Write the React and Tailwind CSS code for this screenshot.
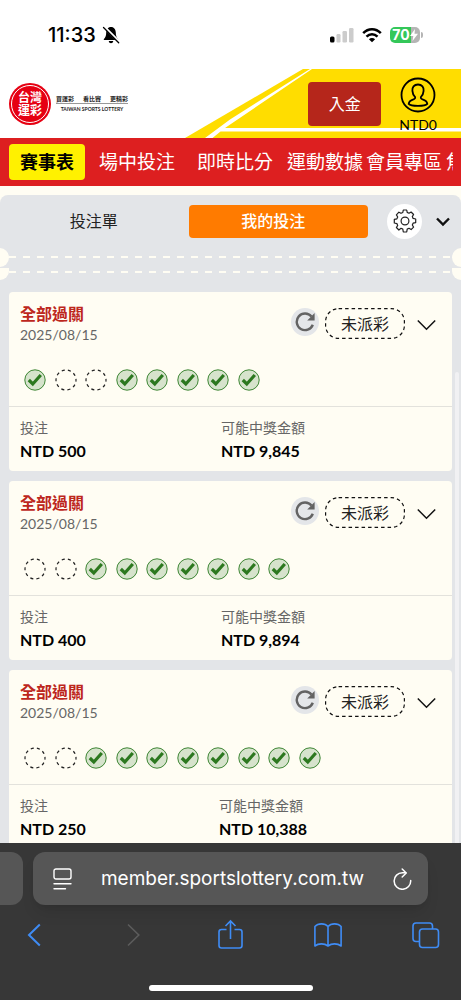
const navItems = [
  { label: '賽事表', active: true, className: 'ml-[9px] w-19 text-lg' },
  { label: '場中投注', className: 'ml-3.5 text-[19px]' },
  { label: '即時比分', className: 'ml-[22px] text-[19px]' },
  { label: '運動數據', className: 'ml-3.5 text-[19px]' },
  { label: '會員專區', className: 'ml-[3px] text-[19px]' },
  { label: '焦點', className: 'ml-1 text-[19px]' },
]

const bets = [
  { id: 1, date: '2025/08/15', legs: [1, 0, 0, 1, 1, 1, 1, 1], stake: 'NTD 500', payout: 'NTD 9,845' },
  { id: 2, date: '2025/08/15', legs: [0, 0, 1, 1, 1, 1, 1, 1, 1], stake: 'NTD 400', payout: 'NTD 9,894' },
  { id: 3, date: '2025/08/15', legs: [0, 0, 1, 1, 1, 1, 1, 1, 1, 1], stake: 'NTD 250', payout: 'NTD 10,388' },
]

function StatusBar() {
  return (
    <div className="flex h-[69px] shrink-0 items-center justify-between bg-white pr-[38px] pl-12 font-['Inter','Liberation_Sans',sans-serif]">
      <div className="flex items-center gap-1.5">
        <span className="text-xl leading-6 font-medium text-black">11:33</span>
        <svg className="h-4.5 w-4.5" viewBox="0 0 18 18">
          <path d="M9 1C5.8 1 4.3 3.5 4.2 6.5 4.1 10 3.7 11 1.8 13.2v.9h14.4v-.9c-1.9-2.2-2.3-3.2-2.4-6.7C13.7 3.5 12.2 1 9 1zM6.7 15h4.6C11 16.5 10.2 17.2 9 17.2S7 16.5 6.7 15z" fill="#000" />
          <path d="M2.2 .8 17.2 15.8" stroke="#fff" strokeWidth="2.6" />
          <path d="M1.500 1.500 16.7 16.7" stroke="#000" strokeWidth="1.3" strokeLinecap="round" />
        </svg>
      </div>
      <div className="flex items-center gap-2">
        <svg className="h-4 w-6" viewBox="0 0 24 16">
          <rect x="0" y="9.500" width="4.5" height="6" rx="1.500" fill="#000" />
          <rect x="6.500" y="7" width="4" height="8.500" rx="1.2" fill="#ccc" />
          <rect x="12.500" y="4" width="4.500" height="11.500" rx="1.2" fill="#ccc" />
          <rect x="19" y="1" width="4.500" height="14.500" rx="1.2" fill="#ccc" />
        </svg>
        <svg className="h-4 w-5" viewBox="0 0 20 16">
          <g fill="none" stroke="#000" strokeWidth="2.500">
            <path d="M1.200 6.200C6.200.9 13.800.9 18.800 6.200" />
            <path d="M4.500 9.700c3.200-3.200 7.800-3.200 11 0" />
          </g>
          <path d="M6.900 12.200c1.800-1.600 4.400-1.600 6.200 0L10 15.300z" fill="#000" />
        </svg>
        <div className="flex items-center gap-px">
          <div className="flex h-4 w-7.5 items-center justify-center rounded-[5px] bg-linear-to-r from-[#34c759] from-70% to-[#b5b5b5] to-70% text-sm leading-4 font-bold text-white">
            70
            <svg className="h-3 w-2" viewBox="0 0 8 12">
              <path d="M5 0 0 7h3.300L2.500 12 8 4.800H4.500z" fill="#fff" />
            </svg>
          </div>
          <span className="h-1.5 w-0.5 rounded-r-sm bg-[#b5b5b5]" />
        </div>
      </div>
    </div>
  )
}

function Brand() {
  return (
    <a href="#" className="flex items-center gap-[5px]" aria-label="台灣運彩">
      <span className="flex h-[42px] w-[42px] items-center justify-center rounded-full bg-[#e60012] p-0.5">
        <span className="flex h-full w-full flex-col items-center justify-center rounded-full border border-white text-xs leading-[13px] font-bold text-white">
          <span>台灣</span>
          <span>運彩</span>
        </span>
      </span>
      <span className="flex w-[72px] flex-col items-center text-[#222]">
        <span className="flex w-full justify-between border-b border-[#999] text-[6px] leading-2 font-bold whitespace-nowrap">
          <span>買運彩</span>
          <span>看比賽</span>
          <span>更精彩</span>
        </span>
        <span className="pt-px text-[5px] leading-2 font-bold whitespace-nowrap">TAIWAN SPORTS LOTTERY</span>
      </span>
    </a>
  )
}

function Header() {
  return (
    <header className="relative flex h-[69px] shrink-0 items-start justify-between bg-white pl-[9px]">
      <svg className="absolute top-0 right-0 h-[69px] w-[276px]" viewBox="0 0 276 69">
        <path d="M0 69 118 0H276V69z" fill="#ffdd00" />
        <path d="M125 0 45 50.500 20 69h7.500L35.500 62.500H276V59H40L127 0z" fill="#fff" />
      </svg>
      <div className="relative pt-3.5">
        <Brand />
      </div>
      <div className="relative flex items-start gap-[18px] pr-6">
        <button className="mt-[13px] h-[44px] w-[73px] rounded-sm bg-[#b5261b] text-base text-white">入金</button>
        <button className="flex flex-col items-center pt-2 text-black">
          <svg className="h-9 w-9" viewBox="0 0 36 36" fill="none" stroke="#000" strokeWidth="1.800">
            <circle cx="18" cy="18" r="16.500" />
            <path d="M18 7.500c-4 0-6 2.800-5.600 6.400.2 2.700 1.100 4.500 2.600 5.900.5 1.300 0 2-1.600 2.600-3 1-4.400 2.200-4.700 4.500 2.300 2.700 16.300 2.700 18.600 0-.3-2.300-1.700-3.500-4.700-4.500-1.600-.6-2.100-1.300-1.600-2.600 1.500-1.400 2.400-3.200 2.600-5.900.4-3.600-1.600-6.400-5.600-6.400z" />
          </svg>
          <span className="pt-1 text-sm leading-4">NTD0</span>
        </button>
      </div>
    </header>
  )
}

function Nav() {
  return (
    <nav className="h-12 shrink-0 bg-[#dd1f20] pr-2">
      <div className="flex h-full items-center overflow-hidden whitespace-nowrap">
        {navItems.map(({ label, active, className }) => (
          <a
            key={label}
            href="#"
            className={`flex h-9 shrink-0 items-center justify-center rounded-sm ${className} ${
              active ? 'bg-[#fff100] font-bold text-black' : 'text-white'
            }`}
          >
            {label}
          </a>
        ))}
      </div>
    </nav>
  )
}

function GearIcon() {
  return (
    <svg className="h-6 w-6" viewBox="0 0 24 24" fill="none" stroke="#222" strokeWidth="1.200" strokeLinejoin="round">
      <circle cx="12" cy="12" r="3.900" />
      <path d="M10.300 1h3.400l.5 2.400 1.800.8L18.100 3l2.500 2.500-1.300 2.100.8 1.800 2.600.6v3.600l-2.600.6-.8 1.800 1.300 2.100-2.500 2.500-2.100-1.300-1.800.8-.5 2.900h-3.400l-.5-2.900-1.800-.8L5.900 21l-2.500-2.500 1.300-2.100-.8-1.800-2.600-.6v-3.600l2.600-.6.8-1.800-1.300-2.100L5.900 3.200 8 4.300l1.800-.8z" />
    </svg>
  )
}

function Perforations() {
  return (
    <>
      <div className="relative flex h-5 items-center overflow-hidden px-[9px]">
        <div className="h-0.5 w-full bg-[repeating-linear-gradient(90deg,#fffdf3_0_7px,transparent_7px_14px)]" />
        <span className="absolute -left-2.5 h-[19px] w-[19px] rounded-full bg-[#fffdf3]" />
        <span className="absolute -right-2.5 h-[19px] w-[19px] rounded-full bg-[#fffdf3]" />
      </div>
      <div className="relative mt-px h-3 overflow-hidden px-[9px] pt-[3px]">
        <div className="h-0.5 w-full bg-[repeating-linear-gradient(90deg,#fffdf3_0_7px,transparent_7px_14px)]" />
        <span className="absolute top-0 left-0 h-3 w-[9px] rounded-br-full bg-[#fffdf3]" />
        <span className="absolute top-0 right-0 h-3 w-[9px] rounded-bl-full bg-[#fffdf3]" />
      </div>
    </>
  )
}

function Leg({ won }) {
  if (!won) {
    return (
      <svg className="h-[22px] w-[22px]" viewBox="0 0 22 22">
        <circle cx="11" cy="11" r="10" fill="none" stroke="#222" strokeWidth="1.200" strokeDasharray="3.100 3.180" strokeDashoffset="1.500" />
      </svg>
    )
  }
  return (
    <svg className="h-[22px] w-[22px]" viewBox="0 0 22 22">
      <circle cx="11" cy="11" r="10.200" fill="#d6e3cc" stroke="#3d8533" strokeWidth="1" />
      <path d="m4.800 11 4 4 8-9" fill="none" stroke="#2c781f" strokeWidth="3.200" />
    </svg>
  )
}

function BetCard({ bet }) {
  return (
    <article className="rounded-sm bg-[#fffdf3]">
      <div className="flex items-start justify-between pt-3 pr-4 pl-[11px]">
        <div>
          <h2 className="text-base leading-5 font-bold text-[#bd271d]">全部過關</h2>
          <p className="text-sm leading-[22px] text-[#666]">{bet.date}</p>
        </div>
        <div className="flex items-start pt-1">
          <button aria-label="重新整理" className="mr-1.5 flex h-7 w-7 items-center justify-center rounded-full bg-[#e4e6e9]">
            <svg className="h-5 w-5" viewBox="0 0 20 20" fill="none" stroke="#636363" strokeWidth="2.400">
              <path d="M17.800 12.800A8.300 8.300 0 1 1 16.500 4.600" />
              <path d="M19.600 1v7.400h-7.400z" fill="#636363" stroke="none" />
            </svg>
          </button>
          <span className="relative flex h-[31px] w-20 items-center justify-center text-base text-[#222]">
            <svg className="absolute inset-0 h-full w-full" viewBox="0 0 80 31">
              <rect x="0.600" y="0.600" width="78.800" height="29.800" rx="13" fill="none" stroke="#111" strokeWidth="1.200" strokeDasharray="3.500 3" />
            </svg>
            未派彩
          </span>
          <button aria-label="展開" className="mt-1.5 ml-3">
            <svg className="h-5 w-[19px]" viewBox="0 0 19 20" fill="none" stroke="#111" strokeWidth="1.500">
              <path d="m.8 6.500 8.700 8.700 8.700-8.700" />
            </svg>
          </button>
        </div>
      </div>
      <div className="border-b border-[#e3e2dc] pt-[23px] pb-[15px] pl-[11px]">
        <div className="grid w-[305px] grid-cols-10 justify-items-center">
          {bet.legs.map((won, i) => (
            <Leg key={i} won={won} />
          ))}
        </div>
      </div>
      <dl className="flex pt-[11px] pb-2 pl-[11px]">
        <div className={bet.id === 3 ? 'w-[199px]' : 'w-[201px]'}>
          <dt className="text-sm leading-5 text-[#666]">投注</dt>
          <dd className="mt-px text-base leading-6 font-bold text-black">{bet.stake}</dd>
        </div>
        <div>
          <dt className="text-sm leading-5 text-[#666]">可能中獎金額</dt>
          <dd className="mt-px text-base leading-6 font-bold text-black">{bet.payout}</dd>
        </div>
      </dl>
    </article>
  )
}

function BetPanel() {
  return (
    <main className="min-h-0 flex-1 overflow-hidden bg-[#fffdf3] pt-[9px]">
      <div className="relative h-full overflow-hidden rounded-t-lg bg-[#e3e5e8]">
        <div className="flex h-[52px] items-center pr-2.5 pl-[9px]">
          <button className="h-[33px] flex-1 pr-2.5 text-base text-[#222]">投注單</button>
          <button className="h-[33px] flex-1 rounded-sm bg-[#ff7b00] pr-2.5 text-base font-medium text-white">我的投注</button>
          <button aria-label="設定" className="ml-[19px] flex h-[35px] w-[35px] items-center justify-center rounded-full bg-white">
            <GearIcon />
          </button>
          <button aria-label="收合" className="ml-[13px]">
            <svg className="h-4 w-4" viewBox="0 0 16 16" fill="none" stroke="#111" strokeWidth="2.400">
              <path d="m2 5.500 6 6 6-6" />
            </svg>
          </button>
        </div>
        <Perforations />
        <div className="flex flex-col gap-2.5 px-[9px] pt-3">
          {bets.map(bet => (
            <BetCard key={bet.id} bet={bet} />
          ))}
        </div>
        <span className="absolute top-[177px] right-0.5 bottom-0 w-1 rounded-t-full bg-[#f1f1f3]" />
      </div>
    </main>
  )
}

function BrowserBar() {
  return (
    <footer className="shrink-0 overflow-hidden bg-[#373737] font-['Inter','Liberation_Sans',sans-serif]">
      <div className="flex gap-2.5 pt-[9px]">
        <span className="h-[53px] w-[23px] shrink-0 rounded-r-xl bg-[#565656]" />
        <div className="mr-[33px] flex h-[53px] flex-1 items-center justify-between rounded-xl bg-[#565656] pr-4 pl-5 shadow-lg">
          <button aria-label="頁面選單">
            <svg className="h-[22px] w-[19px]" viewBox="0 0 19 22" fill="none" stroke="#fff" strokeWidth="1.400" strokeLinecap="round">
              <rect x="1" y="1" width="17" height="10" rx="2" />
              <path d="M1 15.700h17M1 20.700h11.500" />
            </svg>
          </button>
          <span className="text-[19px] leading-6 text-white">member.sportslottery.com.tw</span>
          <button aria-label="重新載入">
            <svg className="h-[22px] w-[19px]" viewBox="0 0 19 22" fill="none" stroke="#fff" strokeWidth="1.500" strokeLinecap="round" strokeLinejoin="round">
              <path d="M17.700 12.500A8.300 8.300 0 1 1 9.500 4.700h3.300" />
              <path d="m9.200 1 4 4-4 4" />
            </svg>
          </button>
        </div>
      </div>
      <div className="flex h-[60px] items-center justify-between px-[21px] text-[#3f8cf5]">
        <button aria-label="上一頁">
          <svg className="h-7 w-7" viewBox="0 0 28 28" fill="none" stroke="currentColor" strokeWidth="2">
            <path d="M18.800 3.500 8 14l10.800 10.500" />
          </svg>
        </button>
        <button aria-label="下一頁" disabled className="text-[#5c5c5c]">
          <svg className="h-7 w-7" viewBox="0 0 28 28" fill="none" stroke="currentColor" strokeWidth="1.600">
            <path d="M9 3.500 19.800 14 9 24.500" />
          </svg>
        </button>
        <button aria-label="分享">
          <svg className="h-8 w-7" viewBox="0 0 28 32" fill="none" stroke="currentColor" strokeWidth="1.600">
            <path d="M9.500 10.500H4.500a2.500 2.500 0 0 0-2.500 2.500v13.500A2.500 2.500 0 0 0 4.500 29h18a2.500 2.500 0 0 0 2.500-2.500v-13.500A2.500 2.500 0 0 0 22.500 10.500h-5M13.500 20V2.500M8.500 7l5-5 5 5" />
          </svg>
        </button>
        <button aria-label="書籤">
          <svg className="h-7 w-7" viewBox="0 0 28 28" fill="none" stroke="currentColor" strokeWidth="1.600" strokeLinejoin="round">
            <path d="M14 5.500C11 2 4 2 .9 5.500V25c3.600-2.800 9.500-2.800 13.100 0 3.600-2.800 9.500-2.800 13.100 0V5.500C24 2 17 2 14 5.500zM14 5.500V25" />
          </svg>
        </button>
        <button aria-label="分頁">
          <svg className="h-7 w-7" viewBox="0 0 28 28" fill="none" stroke="currentColor" strokeWidth="1.600">
            <rect x="7.500" y="8" width="19" height="18.500" rx="3" />
            <path d="M7.500 20.500H4a3 3 0 0 1-3-3V5a3 3 0 0 1 3-3H17.500a3 3 0 0 1 3 3v3" />
          </svg>
        </button>
      </div>
      <div className="flex h-[35px] items-end justify-center pb-[9px]">
        <span className="h-1.5 w-[164px] rounded-full bg-white" />
      </div>
    </footer>
  )
}

export default function App() {
  return (
    <div className="flex h-screen flex-col overflow-hidden bg-white font-['Lato','Noto_Sans_CJK_TC',sans-serif]">
      <StatusBar />
      <Header />
      <Nav />
      <BetPanel />
      <BrowserBar />
    </div>
  )
}
